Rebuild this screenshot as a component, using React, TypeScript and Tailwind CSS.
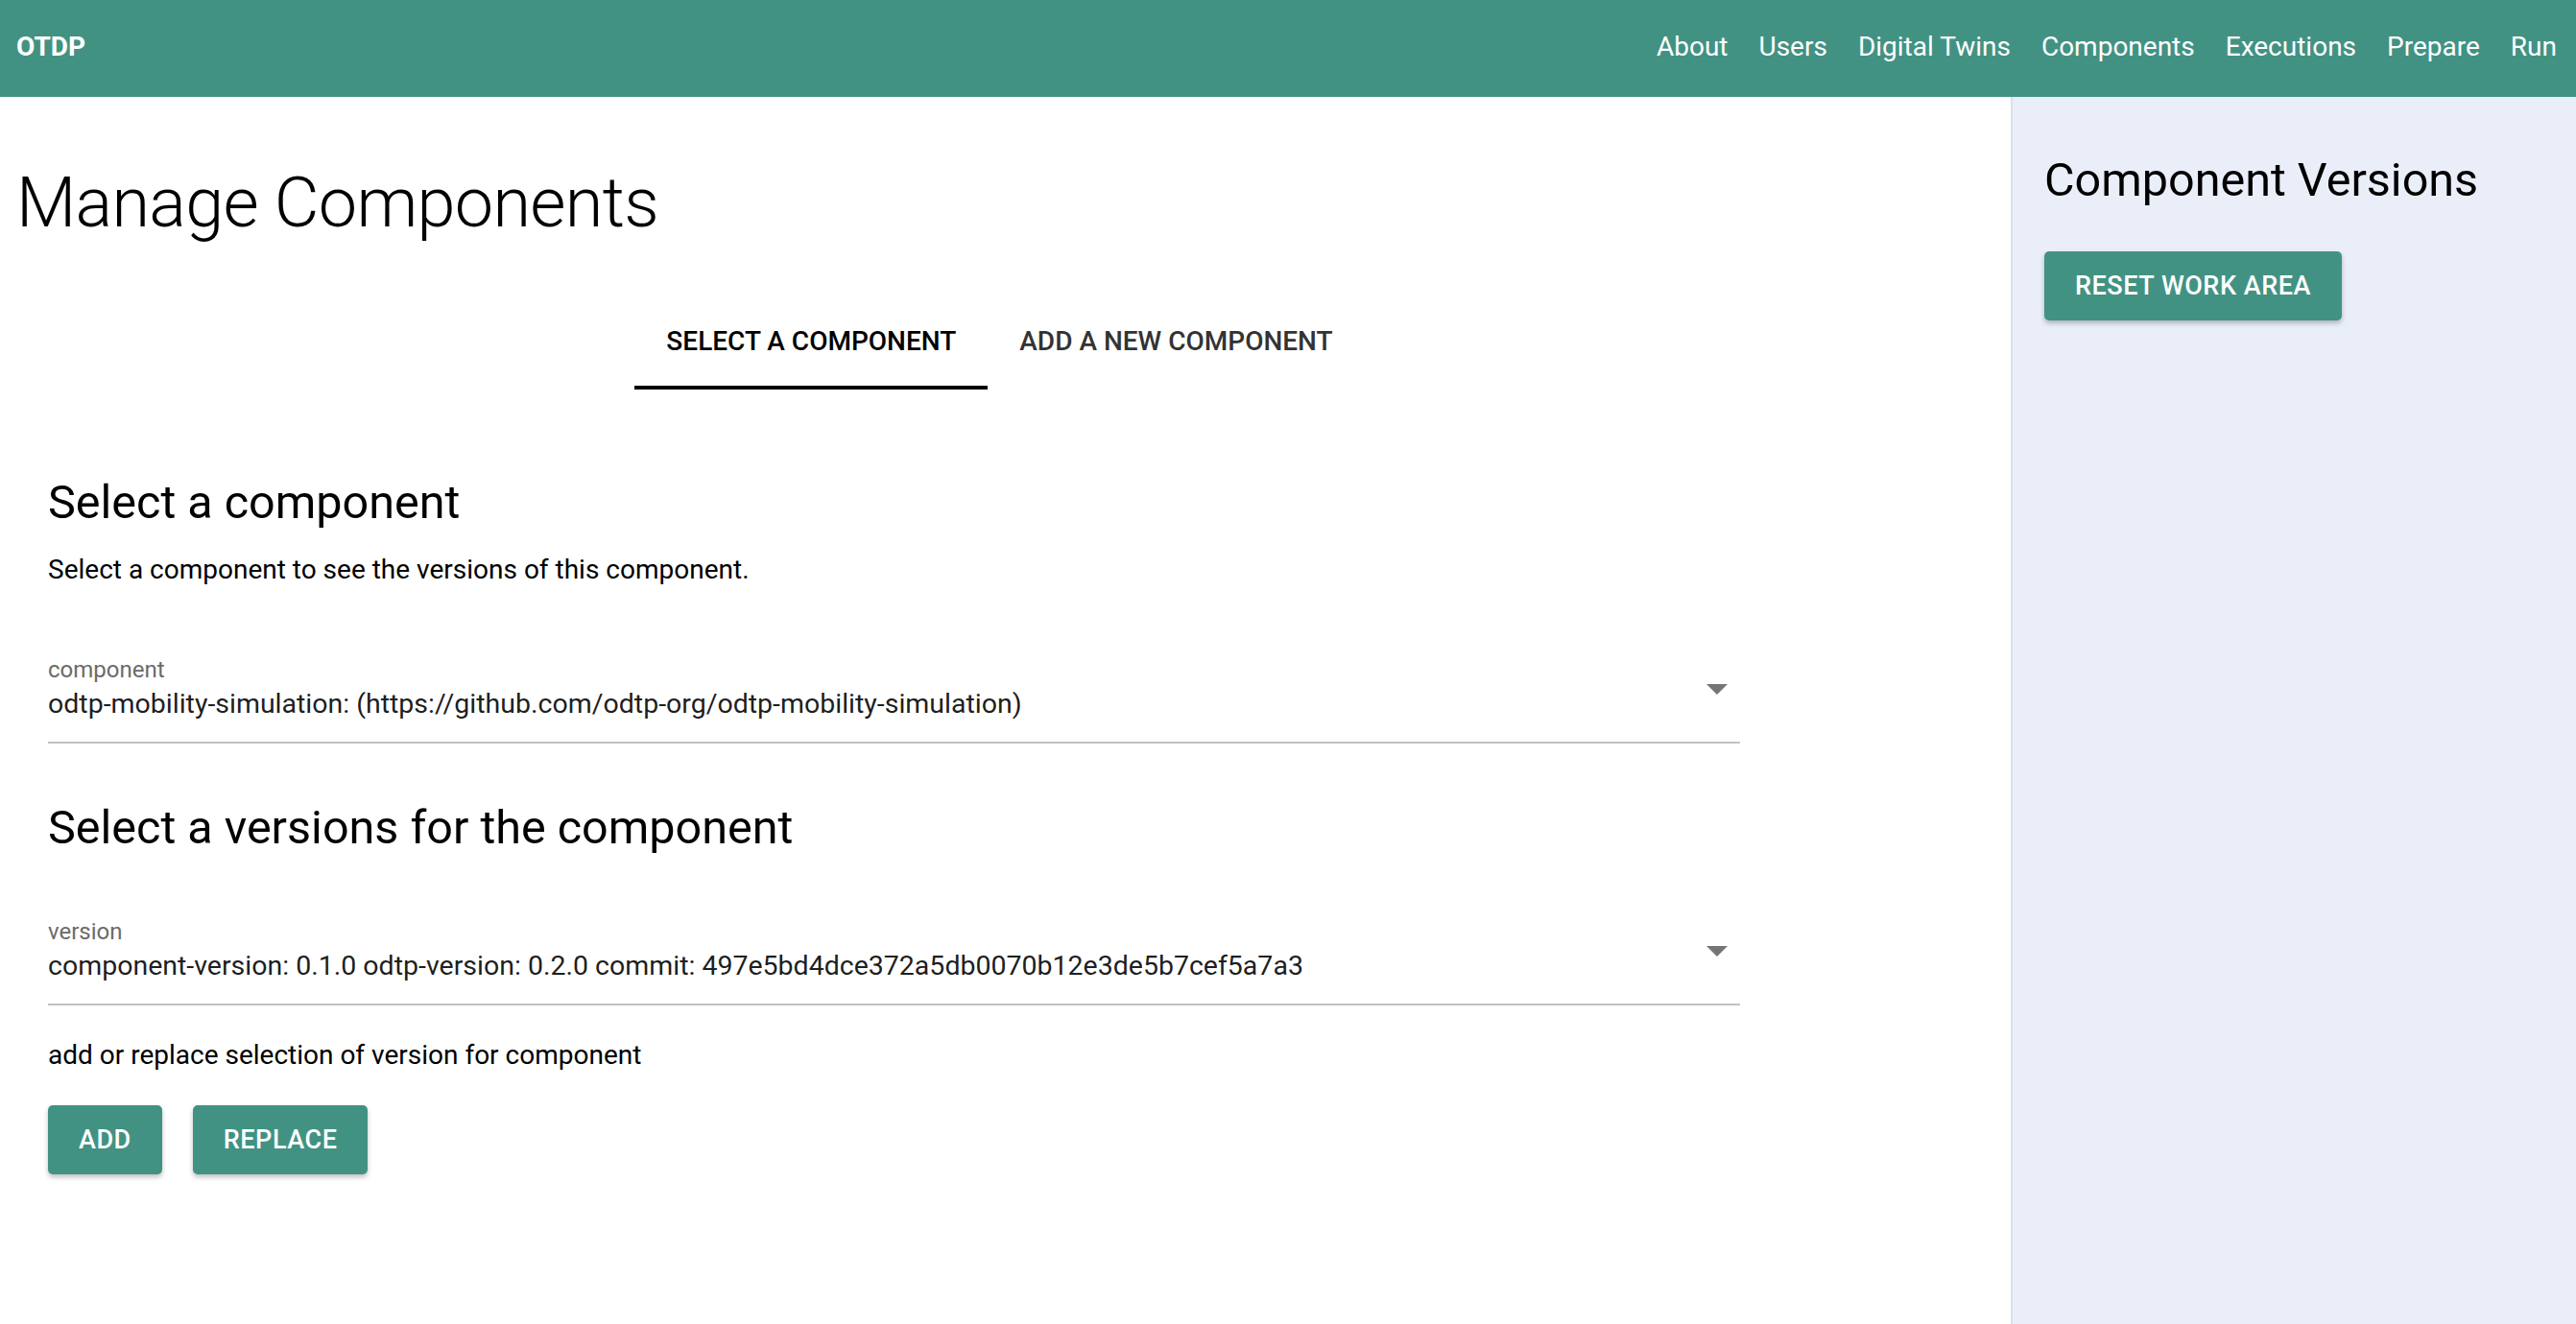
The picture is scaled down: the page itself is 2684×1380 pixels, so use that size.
import React from "react";

const teal = "bg-[#429283]";

function NavLink({ label }: { label: string }) {
  return <a className="text-[28px] text-white leading-none cursor-pointer">{label}</a>;
}

function SelectField({ label, value }: { label: string; value: string }) {
  return (
    <div className="w-[1763px] border-b-2 border-[#c2c2c2] pb-[19px] flex items-center">
      <div className="flex-1 flex flex-col gap-[2px]">
        <span className="text-[24px] leading-[28px] text-[#6b6b6b]">{label}</span>
        <span className="text-[28.5px] leading-[40px] text-black/90">{value}</span>
      </div>
      <svg width="22" height="12" viewBox="0 0 22 12" className="mr-[13px] mb-[1px]">
        <polygon points="0,0 22,0 11,11" fill="#757575" />
      </svg>
    </div>
  );
}

function TealButton({ children }: { children: React.ReactNode }) {
  return (
    <button className={`${teal} h-[72px] px-[32px] rounded-[5px] text-white text-[27px] font-medium uppercase tracking-[0.02em] shadow-[0_3px_5px_rgba(0,0,0,0.25)]`}>
      {children}
    </button>
  );
}

export default function App() {
  return (
    <div className="min-h-screen flex flex-col font-['Roboto',sans-serif] text-black">
      <header className={`${teal} h-[101px] flex items-center justify-between pl-[17px] pr-[20px] pb-[3px]`}>
        <span className="text-[28px] font-bold text-white">OTDP</span>
        <nav className="flex items-center gap-[32px]">
          {["About", "Users", "Digital Twins", "Components", "Executions", "Prepare", "Run"].map((l) => (
            <NavLink key={l} label={l} />
          ))}
        </nav>
      </header>

      <div className="flex flex-1">
        <main className="flex-1 pt-[61px] px-[17px]">
          <h1 className="text-[72px] font-light leading-[100px] tracking-[-0.01em]">Manage Components</h1>

          {/* tabs */}
          <div className="mt-[44px] flex justify-center pr-[12px]">
            <div className="flex">
              <div className="h-[100px] px-[33px] flex items-center relative text-[28px] font-medium text-black">
                SELECT A COMPONENT
                <span className="absolute left-0 right-0 bottom-0 h-[4px] bg-black" />
              </div>
              <div className="h-[100px] px-[33px] flex items-center text-[28px] font-medium text-[#333]">
                ADD A NEW COMPONENT
              </div>
            </div>
          </div>

          <section className="px-[33px] pt-[88px]">
            <h2 className="text-[48.5px] leading-[60px]">Select a component</h2>
            <p className="mt-[20px] text-[28px] leading-[40px]">Select a component to see the versions of this component.</p>
            <div className="mt-[70px]">
              <SelectField
                label="component"
                value="odtp-mobility-simulation: (https://github.com/odtp-org/odtp-mobility-simulation)"
              />
            </div>

            <h2 className="mt-[58px] text-[48.5px] leading-[60px]">Select a versions for the component</h2>
            <div className="mt-[64px]">
              <SelectField
                label="version"
                value="component-version: 0.1.0 odtp-version: 0.2.0 commit: 497e5bd4dce372a5db0070b12e3de5b7cef5a7a3"
              />
            </div>

            <p className="mt-[32px] text-[28px] leading-[40px]">add or replace selection of version for component</p>
            <div className="mt-[32px] flex gap-[32px]">
              <TealButton>Add</TealButton>
              <TealButton>Replace</TealButton>
            </div>
          </section>
        </main>

        <aside className="w-[589px] bg-[#eaeef8] border-l-2 border-[#dcdfe6] pl-[33px] pt-[57px]">
          <h3 className="text-[48.5px] leading-[60px]">Component Versions</h3>
          <div className="mt-[44px]">
            <TealButton>Reset work area</TealButton>
          </div>
        </aside>
      </div>
    </div>
  );
}
